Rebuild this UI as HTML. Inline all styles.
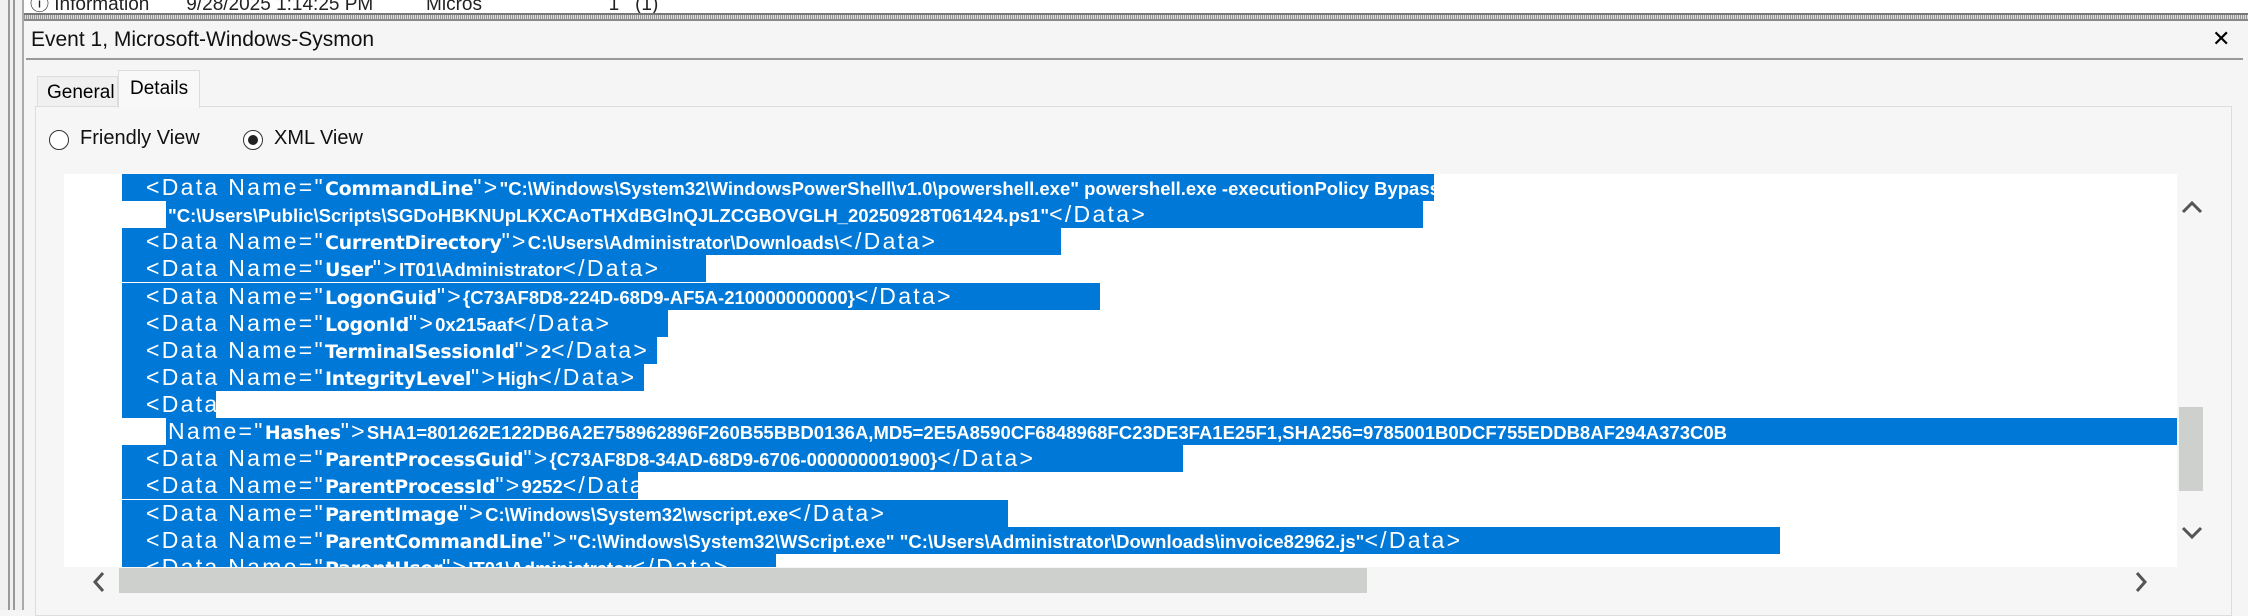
<!DOCTYPE html>
<html><head><meta charset="utf-8"><style>
*{margin:0;padding:0;box-sizing:border-box}
body{width:2248px;height:610px;overflow:hidden;background:#f5f5f5;position:relative;font-family:"Liberation Sans",sans-serif}
.abs{position:absolute}
.seg{font-family:"Liberation Sans Narrow","Liberation Sans",sans-serif}
.ln{position:absolute;height:27px;background:#0078d7;color:#fff;white-space:nowrap;overflow:hidden;font-size:19px;line-height:27px}
.ln b{font-family:"Liberation Sans",sans-serif;font-weight:bold;font-size:18.5px}
.ln i{font-style:normal;font-family:"DejaVu Sans",sans-serif;font-weight:bold;font-size:19px;letter-spacing:-0.3px}
.ln span{font-family:"Liberation Sans",sans-serif;font-size:23px;letter-spacing:2.3px}
</style></head><body>
<div class="abs" style="left:22px;top:0;width:2226px;height:13px;background:#fff;overflow:hidden">
 <div class="abs seg" style="left:8px;top:-11px;font-size:19px;color:#222;white-space:nowrap">ⓘ Information&nbsp;&nbsp;&nbsp;&nbsp;&nbsp;&nbsp;&nbsp;9/28/2025 1:14:25 PM&nbsp;&nbsp;&nbsp;&nbsp;&nbsp;&nbsp;&nbsp;&nbsp;&nbsp;&nbsp;Micros&nbsp;&nbsp;&nbsp;&nbsp;&nbsp;&nbsp;&nbsp;&nbsp;&nbsp;&nbsp;&nbsp;&nbsp;&nbsp;&nbsp;&nbsp;&nbsp;&nbsp;&nbsp;&nbsp;&nbsp;&nbsp;&nbsp;&nbsp;&nbsp;1&nbsp;&nbsp;&nbsp;(1)</div>
</div>
<div class="abs" style="left:22px;top:13px;width:2226px;height:2px;background:#777"></div>
<div class="abs" style="left:22px;top:15px;width:2226px;height:4px;background:repeating-linear-gradient(90deg,#999 0 1px,#ddd 1px 2px)"></div>
<div class="abs" style="left:22px;top:19px;width:2226px;height:2px;background:#888"></div>
<div class="abs" style="left:0;top:0;width:22px;height:610px;background:#f0f0f0"></div>
<div class="abs" style="left:8px;top:0;width:2px;height:610px;background:#999"></div>
<div class="abs" style="left:13px;top:0;width:2px;height:610px;background:#999"></div>
<div class="abs" style="left:22px;top:0;width:2px;height:610px;background:#aaa"></div>
<div class="abs seg" style="left:31px;top:28px;font-size:21px;color:#111">Event 1, Microsoft-Windows-Sysmon</div>
<div class="abs" style="left:2212px;top:27px;font-size:22px;font-weight:bold;font-family:'DejaVu Sans',sans-serif">✕</div>
<div class="abs" style="left:26px;top:58px;width:2217px;height:2px;background:#999"></div>
<div class="abs seg" style="left:37px;top:76px;width:81px;height:31px;border:1px solid #ddd;border-bottom:none;background:#f0f0f0;font-size:19px;padding:5px 0 0 9px">General</div>
<div class="abs" style="left:35px;top:106px;width:2197px;height:510px;border:1px solid #ddd;background:#f6f6f6"></div>
<div class="abs seg" style="left:118px;top:70px;width:82px;height:38px;border:1px solid #ddd;border-bottom:none;background:#f8f8f8;font-size:19px;padding:7px 0 0 11px">Details</div>
<div class="abs" style="left:49px;top:130px;width:20px;height:20px;border:1.5px solid #333;border-radius:50%;background:#fff"></div>
<div class="abs seg" style="left:80px;top:127px;font-size:20px;color:#111">Friendly View</div>
<div class="abs" style="left:243px;top:130px;width:20px;height:20px;border:1.5px solid #333;border-radius:50%;background:#fff"><div style="margin:3.5px;width:10px;height:10px;border-radius:50%;background:#222"></div></div>
<div class="abs seg" style="left:274px;top:127px;font-size:20px;color:#111">XML View</div>
<div class="abs" style="left:64px;top:174px;width:2113px;height:393px;background:#fff;overflow:hidden">
<div class="ln" style="left:58px;top:0;width:1312px;padding-left:24px"><span>&lt;Data Name="</span><i>CommandLine</i><span>"&gt;</span><b>"C:\Windows\System32\WindowsPowerShell\v1.0\powershell.exe" powershell.exe -executionPolicy Bypass -File</b></div>
<div class="ln" style="left:102px;top:27px;width:1257px;padding-left:2px"><b>"C:\Users\Public\Scripts\SGDoHBKNUpLKXCAoTHXdBGlnQJLZCGBOVGLH_20250928T061424.ps1"</b><span>&lt;/Data&gt;</span></div>
<div class="ln" style="left:58px;top:54px;width:939px;padding-left:24px"><span>&lt;Data Name="</span><i>CurrentDirectory</i><span>"&gt;</span><b>C:\Users\Administrator\Downloads\</b><span>&lt;/Data&gt;</span></div>
<div class="ln" style="left:58px;top:81px;width:584px;padding-left:24px"><span>&lt;Data Name="</span><i>User</i><span>"&gt;</span><b>IT01\Administrator</b><span>&lt;/Data&gt;</span></div>
<div class="ln" style="left:58px;top:109px;width:978px;padding-left:24px"><span>&lt;Data Name="</span><i>LogonGuid</i><span>"&gt;</span><b>{C73AF8D8-224D-68D9-AF5A-210000000000}</b><span>&lt;/Data&gt;</span></div>
<div class="ln" style="left:58px;top:136px;width:546px;padding-left:24px"><span>&lt;Data Name="</span><i>LogonId</i><span>"&gt;</span><b>0x215aaf</b><span>&lt;/Data&gt;</span></div>
<div class="ln" style="left:58px;top:163px;width:535px;padding-left:24px"><span>&lt;Data Name="</span><i>TerminalSessionId</i><span>"&gt;</span><b>2</b><span>&lt;/Data&gt;</span></div>
<div class="ln" style="left:58px;top:190px;width:522px;padding-left:24px"><span>&lt;Data Name="</span><i>IntegrityLevel</i><span>"&gt;</span><b>High</b><span>&lt;/Data&gt;</span></div>
<div class="ln" style="left:58px;top:217px;width:94px;padding-left:24px"><span>&lt;Data</span></div>
<div class="ln" style="left:102px;top:244px;width:2011px;padding-left:2px"><span>Name="</span><i>Hashes</i><span>"&gt;</span><b>SHA1=801262E122DB6A2E758962896F260B55BBD0136A,MD5=2E5A8590CF6848968FC23DE3FA1E25F1,SHA256=9785001B0DCF755EDDB8AF294A373C0B</b></div>
<div class="ln" style="left:58px;top:271px;width:1061px;padding-left:24px"><span>&lt;Data Name="</span><i>ParentProcessGuid</i><span>"&gt;</span><b>{C73AF8D8-34AD-68D9-6706-000000001900}</b><span>&lt;/Data&gt;</span></div>
<div class="ln" style="left:58px;top:298px;width:516px;padding-left:24px"><span>&lt;Data Name="</span><i>ParentProcessId</i><span>"&gt;</span><b>9252</b><span>&lt;/Data&gt;</span></div>
<div class="ln" style="left:58px;top:326px;width:886px;padding-left:24px"><span>&lt;Data Name="</span><i>ParentImage</i><span>"&gt;</span><b>C:\Windows\System32\wscript.exe</b><span>&lt;/Data&gt;</span></div>
<div class="ln" style="left:58px;top:353px;width:1658px;padding-left:24px"><span>&lt;Data Name="</span><i>ParentCommandLine</i><span>"&gt;</span><b>"C:\Windows\System32\WScript.exe" "C:\Users\Administrator\Downloads\invoice82962.js"</b><span>&lt;/Data&gt;</span></div>
<div class="ln" style="left:58px;top:380px;width:654px;padding-left:24px"><span>&lt;Data Name="</span><i>ParentUser</i><span>"&gt;</span><b>IT01\Administrator</b><span>&lt;/Data&gt;</span></div>
</div>
<svg class="abs" style="left:2180px;top:198px" width="24" height="18" viewBox="0 0 24 18"><path d="M3 14 L12 5 L21 14" fill="none" stroke="#555" stroke-width="3"/></svg>
<div class="abs" style="left:2179px;top:407px;width:24px;height:84px;background:#cdd0cd"></div>
<svg class="abs" style="left:2180px;top:524px" width="24" height="18" viewBox="0 0 24 18"><path d="M3 4 L12 13 L21 4" fill="none" stroke="#555" stroke-width="3"/></svg>
<svg class="abs" style="left:90px;top:570px" width="18" height="24" viewBox="0 0 18 24"><path d="M13 3 L5 12 L13 21" fill="none" stroke="#555" stroke-width="3"/></svg>
<div class="abs" style="left:119px;top:568px;width:1248px;height:25px;background:#cdd0cd"></div>
<svg class="abs" style="left:2132px;top:570px" width="18" height="24" viewBox="0 0 18 24"><path d="M5 3 L13 12 L5 21" fill="none" stroke="#555" stroke-width="3"/></svg>
</body></html>
